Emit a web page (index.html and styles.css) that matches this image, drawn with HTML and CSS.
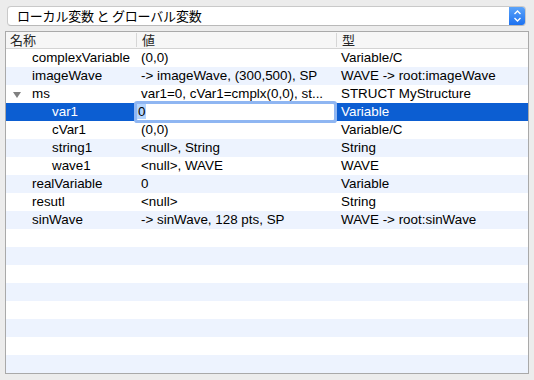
FILE: index.html
```html
<!DOCTYPE html>
<html lang="ja">
<head>
    <meta charset="UTF-8">
    <title>変数</title>
    <link rel="stylesheet" href="styles.css">
</head>
<body>
    <div class="panel">
        <div class="popup">
            <span class="popup-label">ローカル変数 と グローバル変数</span>
            <span class="stepper">
                <svg width="9" height="14" viewBox="0 0 9 14">
                    <path d="M1.5 5 L4.5 2 L7.5 5" fill="none" stroke="#fff" stroke-width="1.4"/>
                    <path d="M1.5 9 L4.5 12 L7.5 9" fill="none" stroke="#fff" stroke-width="1.4"/>
                </svg>
            </span>
        </div>

        <div class="table">
            <div class="head">
                <div class="hcell first">名称</div>
                <div class="hcell">値</div>
                <div class="hcell">型</div>
            </div>

            <div class="row">
                <div class="cell name">complexVariable</div>
                <div class="cell">(0,0)</div>
                <div class="cell">Variable/C</div>
            </div>
            <div class="row alt">
                <div class="cell name">imageWave</div>
                <div class="cell">-&gt; imageWave, (300,500), SP</div>
                <div class="cell">WAVE -&gt; root:imageWave</div>
            </div>
            <div class="row">
                <div class="cell name"><span class="disclosure"></span>ms</div>
                <div class="cell">var1=0, cVar1=cmplx(0,0), st...</div>
                <div class="cell">STRUCT MyStructure</div>
            </div>
            <div class="row selected">
                <div class="cell name child">var1</div>
                <div class="cell edit-cell"><span class="edit"><span class="sel-text">0</span></span></div>
                <div class="cell">Variable</div>
            </div>
            <div class="row">
                <div class="cell name child">cVar1</div>
                <div class="cell">(0,0)</div>
                <div class="cell">Variable/C</div>
            </div>
            <div class="row alt">
                <div class="cell name child">string1</div>
                <div class="cell">&lt;null&gt;, String</div>
                <div class="cell">String</div>
            </div>
            <div class="row">
                <div class="cell name child">wave1</div>
                <div class="cell">&lt;null&gt;, WAVE</div>
                <div class="cell">WAVE</div>
            </div>
            <div class="row alt">
                <div class="cell name">realVariable</div>
                <div class="cell">0</div>
                <div class="cell">Variable</div>
            </div>
            <div class="row">
                <div class="cell name">resutl</div>
                <div class="cell">&lt;null&gt;</div>
                <div class="cell">String</div>
            </div>
            <div class="row alt">
                <div class="cell name">sinWave</div>
                <div class="cell">-&gt; sinWave, 128 pts, SP</div>
                <div class="cell">WAVE -&gt; root:sinWave</div>
            </div>

            <!-- empty striped rows -->
            <div class="row empty"></div>
            <div class="row empty alt"></div>
            <div class="row empty"></div>
            <div class="row empty alt"></div>
            <div class="row empty"></div>
            <div class="row empty alt"></div>
            <div class="row empty"></div>
            <div class="row empty alt"></div>
        </div>
    </div>
</body>
</html>
```

FILE: styles.css
```css
/* Page */
body {
    margin: 0;
    background: #ececec;
    font-family: "Liberation Sans", "Noto Sans CJK JP", Arial, sans-serif;
    font-size: 13.4px;
    color: #000;
}

.panel {
    padding: 6px 5px 0 5px;
    display: flex;
    flex-direction: column;
    gap: 5px;
}

/* Popup button */
.popup {
    margin: 0 3px 0 2px;
    height: 20px;
    box-sizing: border-box;
    background: #fff;
    border: 1px solid #c9c9c9;
    border-bottom-color: #b9b9b9;
    border-radius: 4px;
    display: flex;
    align-items: center;
    justify-content: space-between;
    overflow: hidden;
}

.popup-label {
    padding-left: 9px;
    font-family: "Noto Sans CJK JP", sans-serif;
    font-size: 13px;
    line-height: 18px;
    letter-spacing: -0.2px;
}

.stepper {
    width: 17px;
    height: 20px;
    margin: -1px -1px -1px 0;
    background: linear-gradient(#5ea6fa, #1a6ff0);
    border-radius: 0 4px 4px 0;
    display: flex;
    align-items: center;
    justify-content: center;
}

/* Table */
.table {
    background: #fff;
    border: 1px solid #a9a9a9;
}

.head,
.row {
    display: grid;
    grid-template-columns: 130px 200px 1fr;
}

.head {
    height: 16px;
    background: #f6f6f6;
    border-bottom: 1px solid #d3d3d3;
}

.hcell {
    font-family: "Noto Sans CJK JP", sans-serif;
    font-size: 13px;
    color: #262626;
    padding-left: 5px;
    margin: 1px 0;
    border-left: 1px solid #d6d6d6;
    line-height: 14px;
}

.hcell.first {
    border-left: none;
    padding-left: 4px;
}

.row {
    height: 18px;
}

.row.alt {
    background: #edf3fe;
}

.row.selected {
    background: #0c5ed2;
    color: #fff;
}

.cell {
    line-height: 18px;
    padding-left: 5px;
    white-space: nowrap;
    overflow: hidden;
}

.cell.name {
    padding-left: 26px;
    position: relative;
}

.cell.child {
    padding-left: 46px;
}

.disclosure {
    position: absolute;
    left: 7px;
    top: 7px;
    width: 0;
    height: 0;
    border-left: 4px solid transparent;
    border-right: 4px solid transparent;
    border-top: 6px solid #808080;
}

/* Inline editor */
.edit-cell {
    padding: 1px 2px 1px 1px;
    overflow: visible;
}

.edit {
    display: block;
    height: 16px;
    background: #fff;
    color: #000;
    line-height: 16px;
    border-radius: 1px;
    box-shadow: 0 0 0 3px #8fb6f2;
}

.sel-text {
    background: #b4d5fe;
    padding: 0 1px;
}
```
